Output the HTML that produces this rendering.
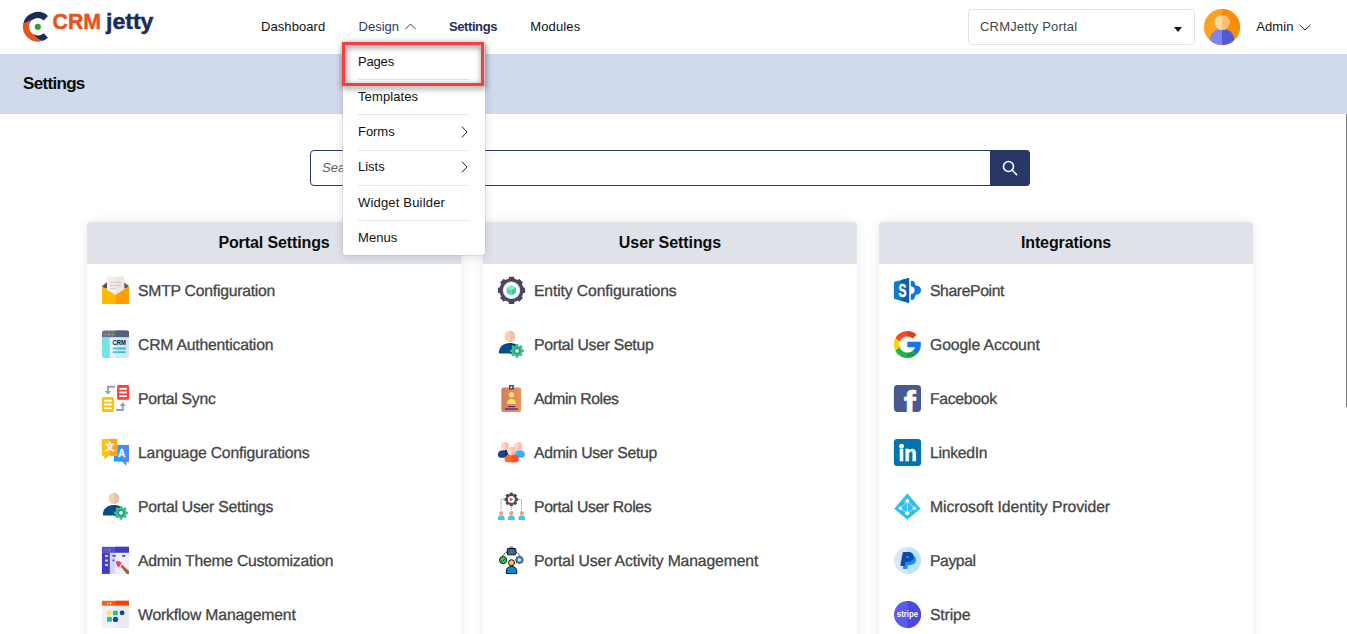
<!DOCTYPE html>
<html lang="en">
<head>
<meta charset="utf-8">
<title>Settings</title>
<style>
*{box-sizing:border-box;margin:0;padding:0}
html,body{width:1347px;height:634px;overflow:hidden;background:#fff}
body{font-family:"Liberation Sans",sans-serif;color:#111;position:relative}
.abs{position:absolute;white-space:nowrap;line-height:1}
#nav{position:absolute;left:0;top:0;width:1347px;height:54px;background:#fff}
.nv{position:absolute;top:19px;font-size:13px;line-height:15px;white-space:nowrap;color:#111}
#band{position:absolute;left:0;top:54px;width:1347px;height:60px;background:#d1d9ec}
#band h1{position:absolute;left:23px;top:20px;font-size:17px;line-height:19px;font-weight:bold;color:#0b0b0b;white-space:nowrap}
#sel{position:absolute;left:968px;top:9px;width:227px;height:36px;border:1px solid #e1e4ef;border-radius:4px;background:#fff}
#sel .st{position:absolute;left:11px;top:9px;font-size:13px;line-height:15px;color:#444;white-space:nowrap}
#sel i{position:absolute;left:204.5px;top:17px;width:0;height:0;border-left:4px solid transparent;border-right:4px solid transparent;border-top:5px solid #111}
#search{position:absolute;left:310px;top:150px;width:720px;height:36px;border:1px solid #273867;border-radius:4px;background:#fff}
#search .ph{position:absolute;left:11px;top:9px;font-size:13px;line-height:15px;font-style:italic;color:#5e5e5e;white-space:nowrap}
#sbtn{position:absolute;left:990px;top:150px;width:40px;height:36px;background:#273867;border-radius:0 4px 4px 0}
.card{position:absolute;top:222px;width:374px;height:430px;background:#fff;border-radius:4px 4px 0 0;box-shadow:0 0 12px rgba(0,0,0,.085)}
.card .hd{position:absolute;left:0;top:0;width:100%;height:42px;background:#dfe2e8;border-radius:4px 4px 0 0;text-align:center;font-weight:bold;font-size:16px;line-height:42px;color:#0b0b0b;white-space:nowrap}
.it{position:absolute;left:14px;height:28px;width:340px}
.it svg{position:absolute;left:0;top:0;width:28px;height:28px;overflow:visible}
.it .lbl{position:absolute;left:37px;top:6px;font-size:15.75px;line-height:18px;text-rendering:geometricPrecision;color:#444;white-space:nowrap;-webkit-text-stroke:.3px #444}
#dd{position:absolute;left:343px;top:44px;width:142px;height:211.4px;background:#fff;border-radius:0 0 3px 3px;box-shadow:0 2px 10px rgba(40,50,90,.17),0 0 0 1px rgba(205,205,238,.4)}
#dd .di{position:absolute;left:15px;width:111px;height:35px;font-size:13px;line-height:35px;color:#111;white-space:nowrap}
#dd .ln{position:absolute;left:15px;width:111px;height:1px;background:#e4e7f4}
#dd .di svg{position:absolute;right:1px;top:12px;width:7px;height:12px}
#hl{position:absolute;left:342px;top:42px;width:142px;height:44px;border:3px solid #f93c40;filter:drop-shadow(1px 2px 3px rgba(0,0,0,.6))}
#sb{position:absolute;left:1345.6px;top:114px;width:1.4px;height:293px;background:#777}
</style>
</head>
<body>
<div id="nav">
  <svg class="abs" style="left:22px;top:10px" width="134" height="36" viewBox="0 0 134 36">
    <path d="M25.96 5.9 A14.9 14.9 0 0 0 1.17 13.96 L10.56 9.85 A8.7 8.7 0 0 1 21.73 10.44 Z" fill="#1b2c58"/>
    <path d="M11 24.05 A8.7 8.7 0 0 0 21.73 23.16 L25.96 27.7 A14.9 14.9 0 0 1 19.91 31.12 Q14 28.6 11 24.05 Z" fill="#1b2c58"/>
    <path d="M1.17 13.96 A14.9 14.9 0 0 0 19.91 31.12 Q14 28.6 11 24.05 A8.7 8.7 0 0 1 10.56 9.85 Z" fill="#e9531f"/>
    <circle cx="15.8" cy="16.8" r="3.1" fill="#2aa52a"/>
    <text x="30.5" y="18.5" font-family="Liberation Sans, sans-serif" font-weight="bold" font-size="22.8" fill="#e8521e" stroke="#e8521e" stroke-width=".5" textLength="48.6" lengthAdjust="spacingAndGlyphs">CRM</text>
    <text x="84" y="18.5" font-family="Liberation Sans, sans-serif" font-weight="bold" font-size="22" fill="#1b2c58" stroke="#1b2c58" stroke-width=".5" textLength="47.4" lengthAdjust="spacingAndGlyphs">jetty</text>
  </svg>
  <span class="nv" style="left:261px"><span id="n0" style="letter-spacing:0.077px">Dashboard</span></span>
  <span class="nv" style="left:358.6px;color:#2c3a66"><span id="n1" style="letter-spacing:-0.011px">Design</span></span>
  <svg class="abs" style="left:405px;top:23px" width="11" height="7" viewBox="0 0 11 7"><path d="M0.5 6 L5.5 1 L10.5 6" fill="none" stroke="#2c3a66" stroke-width="1"/></svg>
  <span class="nv" style="left:449px;color:#1f2d5a;font-weight:bold"><span id="n2" style="letter-spacing:-0.412px">Settings</span></span>
  <span class="nv" style="left:530.3px"><span id="n3" style="letter-spacing:0.123px">Modules</span></span>
  <div id="sel"><span class="st"><span id="n4" style="letter-spacing:0.177px">CRMJetty Portal</span></span><i></i></div>
  <svg class="abs" style="left:1204px;top:9px" width="36" height="36" viewBox="0 0 36 36">
    <defs><clipPath id="avc"><circle cx="18" cy="18" r="18"/></clipPath></defs>
    <g clip-path="url(#avc)">
      <rect x="0" y="0" width="36" height="36" fill="#fba220"/>
      <rect x="18" y="0" width="18" height="36" fill="#fb8c0a"/>
      <path d="M5.8 36 V31 C5.8 24.5 10.5 20 18 20 H19 V36 Z" fill="#7b86e8"/>
      <path d="M30.2 36 V31 C30.2 24.5 25.5 20 18 20 V36 Z" fill="#4c5bd8"/>
      <circle cx="18" cy="13.5" r="7.5" fill="#fdd9a0"/>
      <path d="M18 6 A7.5 7.5 0 0 1 18 21 Z" fill="#fbc07a"/>
    </g>
  </svg>
  <span class="nv" style="left:1256.3px"><span id="n5" style="letter-spacing:0.068px">Admin</span></span>
  <svg class="abs" style="left:1298.6px;top:24.4px" width="12" height="7" viewBox="0 0 12 7"><path d="M0.5 0.8 L6 6 L11.5 0.8" fill="none" stroke="#222" stroke-width="1"/></svg>
</div>
<div id="band"><h1><span id="b0" style="letter-spacing:-0.683px">Settings</span></h1></div>

<div id="search"><span class="ph">Search</span></div>
<div id="sbtn"><svg class="abs" style="left:12px;top:10px" width="16" height="16" viewBox="0 0 16 16"><circle cx="6.5" cy="6.5" r="5" fill="none" stroke="#fff" stroke-width="1.6"/><path d="M10.3 10.3 L14.6 14.6" stroke="#fff" stroke-width="1.5" stroke-linecap="round"/></svg></div>

<div class="card" style="left:87px"><div class="hd"><span id="h0" class="" style=";letter-spacing:-0.114px">Portal Settings</span></div>
  <div class="it" style="top:55.0px"><svg viewBox="0 0.4 28 28"><path d="M1 9.6 L5.6 6 H23.4 L28 9.6 V12 H1 Z" fill="#5d5058"/><rect x="6" y="0" width="17.2" height="20" fill="#f6efeb"/><rect x="14.5" y="0" width="8.7" height="20" fill="#efe4e0"/><rect x="9" y="5" width="11" height="1.3" fill="#d6cdcc"/><rect x="9" y="8.2" width="11" height="1.3" fill="#d6cdcc"/><rect x="9" y="11.4" width="6" height="1.3" fill="#d9d0ce"/><path d="M1 9.6 L14.5 18.6 L28 9.6 V26.2 Q28 27.4 26.8 27.4 H2.2 Q1 27.4 1 26.2 Z" fill="#ffba00"/><path d="M28 9.6 L14.5 18.6 V27.4 H26.8 Q28 27.4 28 26.2 Z" fill="#ff9d00"/></svg><span id="t0_0" class="lbl" style=";letter-spacing:-0.246px">SMTP Configuration</span></div>
  <div class="it" style="top:109.0px"><svg viewBox="0 0.4 28 28"><path d="M1 2.2 Q1 0 3.2 0 H25.8 Q28 0 28 2.2 V7 H1 Z" fill="#66718f"/><path d="M14.5 0 H25.8 Q28 0 28 2.2 V7 H14.5 Z" fill="#56607f"/><circle cx="4.6" cy="4" r="0.9" fill="#f5782a"/><circle cx="8.1" cy="4" r="0.9" fill="#f5b12a"/><circle cx="11.7" cy="4" r="0.9" fill="#7ac82a"/><path d="M1 7 H8.9 V27.4 H3.2 Q1 27.4 1 25.2 Z" fill="#76e2e4"/><path d="M8.9 7 H28 V25.2 Q28 27.4 25.8 27.4 H8.9 Z" fill="#e4efff"/><path d="M14.5 7 H28 V25.2 Q28 27.4 25.8 27.4 H14.5 Z" fill="#d0e4fd"/><text x="18.3" y="14.9" text-anchor="middle" font-family="Liberation Sans, sans-serif" font-weight="bold" font-size="6.6" fill="#111" textLength="13.4" lengthAdjust="spacingAndGlyphs">CRM</text><rect x="11.6" y="17" width="6.7" height="1.9" rx=".9" fill="#2fd3d6"/><rect x="17.5" y="17" width="7.5" height="1.9" rx=".9" fill="#3bbdb7"/><rect x="11.6" y="20.6" width="6.7" height="1.9" rx=".9" fill="#2fd3d6"/><rect x="17.5" y="20.6" width="7.5" height="1.9" rx=".9" fill="#3bbdb7"/></svg><span id="t0_1" class="lbl" style=";letter-spacing:-0.222px">CRM Authentication</span></div>
  <div class="it" style="top:163.0px"><svg viewBox="0 0.4 28 28"><rect x="16.1" y="0.3" width="11.9" height="14.9" rx="1.5" fill="#ff3a3a"/><rect x="18.3" y="3.2" width="7.6" height="1.9" fill="#fff"/><rect x="18.3" y="6.9" width="7.6" height="1.9" fill="#fff"/><rect x="18.3" y="10.6" width="7.6" height="1.9" fill="#fff"/><rect x="0.9" y="12.3" width="12" height="15.1" rx="1.5" fill="#ffbe0b"/><rect x="3.1" y="15.2" width="7.6" height="1.9" fill="#fff"/><rect x="3.1" y="18.9" width="7.6" height="1.9" fill="#fff"/><rect x="3.1" y="22.6" width="7.6" height="1.9" fill="#fff"/><path d="M13.9 2.1 H6.9 V9" fill="none" stroke="#90a4ae" stroke-width="1.9"/><path d="M3.6 6.3 L6.9 9.9 L10.2 6.3 Z" fill="#90a4ae"/><path d="M15.1 25.4 H21.8 V18.6" fill="none" stroke="#90a4ae" stroke-width="1.9"/><path d="M18.5 21.3 L21.8 17.7 L25.1 21.3 Z" fill="#90a4ae"/></svg><span id="t0_2" class="lbl" style=";letter-spacing:-0.277px">Portal Sync</span></div>
  <div class="it" style="top:217.0px"><svg viewBox="0 0.4 28 28"><path d="M12.9 6.3 H28 V23 H12.9 Z" fill="#1da1fb"/><path d="M20.5 6.3 H28 V23 H25.5 L25.2 27.2 L21.1 23 H20.5 Z" fill="#4a8bf8"/><rect x="0.6" y="0" width="15.8" height="17.4" fill="#fff" opacity=".6"/><path d="M0.9 0.3 H16.1 V17.1 H7.6 L3.5 21.2 L3.1 17.1 H0.9 Z" fill="#ffc107"/><rect x="8.8" y="0.3" width="7.3" height="16.8" fill="#ffa026"/><text x="8.8" y="11.9" text-anchor="middle" font-family="Liberation Sans, Noto Sans CJK SC, sans-serif" font-weight="bold" font-size="9.2" fill="#fdf6ec" stroke="#fdf6ec" stroke-width=".5">文</text><text x="20.5" y="18.6" text-anchor="middle" font-family="Liberation Sans, sans-serif" font-weight="bold" font-size="10" fill="#eef3fd" stroke="#eef3fd" stroke-width=".3">A</text></svg><span id="t0_3" class="lbl" style=";letter-spacing:-0.196px">Language Configurations</span></div>
  <div class="it" style="top:271.0px"><svg viewBox="0 0.4 28 28"><ellipse cx="12.9" cy="5.8" rx="5.3" ry="5.7" fill="#f5d3b9"/><path d="M12.9 0.1 A5.3 5.7 0 0 1 12.9 11.5 Z" fill="#ebc4a5"/><path d="M1.9 22 C1.9 16 6.5 12.3 12.9 12.3 H15 V23 H2.9 Q1.9 23 1.9 22 Z" fill="#014f8c"/><path d="M12.9 12.3 C16 12.3 18 13 19.5 14.2 V23 H12.9 Z" fill="#0a4070"/><rect x="18.65" y="13.30" width="2.70" height="13.80" rx="0.4" fill="#3dbf8f" transform="rotate(0.0 20.00 20.20)"/><rect x="18.65" y="13.30" width="2.70" height="13.80" rx="0.4" fill="#3dbf8f" transform="rotate(45.0 20.00 20.20)"/><rect x="18.65" y="13.30" width="2.70" height="13.80" rx="0.4" fill="#3dbf8f" transform="rotate(90.0 20.00 20.20)"/><rect x="18.65" y="13.30" width="2.70" height="13.80" rx="0.4" fill="#3dbf8f" transform="rotate(135.0 20.00 20.20)"/><circle cx="20.00" cy="20.20" r="5.40" fill="#3dbf8f"/><circle cx="20" cy="20.2" r="3.6" fill="#2f9c8a"/><circle cx="20" cy="20.2" r="1.9" fill="#f1f1fb"/></svg><span id="t0_4" class="lbl" style=";letter-spacing:-0.243px">Portal User Settings</span></div>
  <div class="it" style="top:325.0px"><svg viewBox="0 0.4 28 28"><rect x="0.9" y="0.2" width="27.1" height="6.1" fill="#5653cc"/><rect x="14.3" y="0.2" width="13.7" height="6.1" fill="#3f3dc4"/><circle cx="5" cy="3.4" r="0.95" fill="#f03a5f"/><circle cx="8.4" cy="3.4" r="0.95" fill="#1dc98a"/><rect x="0.9" y="6.3" width="8" height="21" fill="#3f3dc4"/><rect x="8.9" y="6.3" width="19.1" height="21" fill="#d5d5f3"/><rect x="14.3" y="6.3" width="13.7" height="21" fill="#eeeefe"/><rect x="4" y="8.3" width="3" height="2.1" fill="#f7c52b"/><rect x="4" y="12.9" width="3" height="2.1" fill="#f7c52b"/><rect x="4" y="17.3" width="3" height="2.1" fill="#f7c52b"/><rect x="11.5" y="8.4" width="3.2" height="1.7" fill="#4a48c8"/><rect x="21.1" y="8.4" width="3.2" height="1.7" fill="#4a48c8"/><rect x="11.6" y="12.9" width="1.8" height="1.8" fill="#4a48c8"/><path d="M19.5 19.6 L21.1 18.2 L28 24.5 V27.3 H25.8 Z" fill="#a0623a"/><path d="M18.8 20.2 L21.6 17.8 L20.4 16 L17.8 19 Z" fill="#fbf3f3"/><path d="M15 14.6 C17.2 14.2 19.6 15 20.6 16.4 L17.8 20.8 C16 19.4 14.8 17.2 15 14.6 Z" fill="#f04060"/></svg><span id="t0_5" class="lbl" style=";letter-spacing:-0.269px">Admin Theme Customization</span></div>
  <div class="it" style="top:379.0px"><svg viewBox="0 0.4 28 28"><rect x="0.9" y="0.2" width="27.1" height="5" fill="#ff5a10"/><rect x="14.5" y="0.2" width="13.5" height="5" fill="#f04400"/><rect x="0.9" y="5.2" width="27.1" height="22.1" fill="#eef2fa"/><rect x="14.5" y="5.2" width="13.5" height="22.1" fill="#e6eaf5"/><rect x="3.3" y="1.9" width="1.7" height="1.7" fill="#1dbf8f"/><rect x="6.1" y="1.9" width="1.7" height="1.7" fill="#ffd23a"/><rect x="8.7" y="1.9" width="1.6" height="1.7" fill="#fff"/><path d="M8.4 9.2 L11.6 12.3 L8.4 15.5 L5.2 12.3 Z" fill="#ffe34d"/><rect x="12" y="10.1" width="4.8" height="4.5" rx=".4" fill="#1cc49a"/><circle cx="21.1" cy="12.3" r="2.4" fill="#1d3a8f"/><rect x="6" y="16.4" width="4.9" height="4.8" rx=".4" fill="#1cc49a"/><circle cx="14.5" cy="18.8" r="2.6" fill="#1443a8"/><path d="M10.9 12.3 H12 M16.8 12.3 H18.8 M8.4 15.3 V16.4 M10.9 18.8 H12" stroke="#c9cfe0" stroke-width=".7"/></svg><span id="t0_6" class="lbl" style=";letter-spacing:-0.167px">Workflow Management</span></div>
</div>
<div class="card" style="left:483px"><div class="hd"><span id="h1" class="" style=";letter-spacing:-0.065px">User Settings</span></div>
  <div class="it" style="top:55.0px"><svg viewBox="0 0.4 28 28"><g><rect x="11.80" y="0.10" width="5.40" height="27.20" rx="0.4" fill="#4b4559" transform="rotate(0.0 14.50 13.70)"/><rect x="11.80" y="0.10" width="5.40" height="27.20" rx="0.4" fill="#4b4559" transform="rotate(45.0 14.50 13.70)"/><rect x="11.80" y="0.10" width="5.40" height="27.20" rx="0.4" fill="#4b4559" transform="rotate(90.0 14.50 13.70)"/><rect x="11.80" y="0.10" width="5.40" height="27.20" rx="0.4" fill="#4b4559" transform="rotate(135.0 14.50 13.70)"/><circle cx="14.50" cy="13.70" r="12.00" fill="#4b4559"/></g><circle cx="14.5" cy="13.7" r="8.7" fill="#e6e6fa"/><circle cx="14.5" cy="13.7" r="7.8" fill="#fdfdff"/><path d="M14.3 8.4 L18.9 11 L14.3 13.7 L9.7 11 Z" fill="#7df0c0"/><path d="M9.7 11 L14.3 13.7 V19 L9.7 16.4 Z" fill="#55dcae"/><path d="M18.9 11 L14.3 13.7 V19 L18.9 16.4 Z" fill="#3fc79a"/></svg><span id="t1_0" class="lbl" style=";letter-spacing:-0.135px">Entity Configurations</span></div>
  <div class="it" style="top:109.0px"><svg viewBox="0 0.4 28 28"><ellipse cx="12.9" cy="5.8" rx="5.3" ry="5.7" fill="#f5d3b9"/><path d="M12.9 0.1 A5.3 5.7 0 0 1 12.9 11.5 Z" fill="#ebc4a5"/><path d="M1.9 22 C1.9 16 6.5 12.3 12.9 12.3 H15 V23 H2.9 Q1.9 23 1.9 22 Z" fill="#014f8c"/><path d="M12.9 12.3 C16 12.3 18 13 19.5 14.2 V23 H12.9 Z" fill="#0a4070"/><rect x="18.65" y="13.30" width="2.70" height="13.80" rx="0.4" fill="#3dbf8f" transform="rotate(0.0 20.00 20.20)"/><rect x="18.65" y="13.30" width="2.70" height="13.80" rx="0.4" fill="#3dbf8f" transform="rotate(45.0 20.00 20.20)"/><rect x="18.65" y="13.30" width="2.70" height="13.80" rx="0.4" fill="#3dbf8f" transform="rotate(90.0 20.00 20.20)"/><rect x="18.65" y="13.30" width="2.70" height="13.80" rx="0.4" fill="#3dbf8f" transform="rotate(135.0 20.00 20.20)"/><circle cx="20.00" cy="20.20" r="5.40" fill="#3dbf8f"/><circle cx="20" cy="20.2" r="3.6" fill="#2f9c8a"/><circle cx="20" cy="20.2" r="1.9" fill="#f1f1fb"/></svg><span id="t1_1" class="lbl" style=";letter-spacing:-0.289px">Portal User Setup</span></div>
  <div class="it" style="top:163.0px"><svg viewBox="0 0.4 28 28"><defs><linearGradient id="rg" x1="0" x2="1" y1="0" y2="0"><stop offset="0" stop-color="#cf7f5f"/><stop offset="1" stop-color="#ea9362"/></linearGradient></defs><rect x="4.4" y="2.9" width="19.8" height="24.4" rx="2" fill="url(#rg)"/><rect x="12" y="0.3" width="4.8" height="4.6" rx=".6" fill="#5a2a78"/><rect x="13.4" y="1.8" width="1.9" height="1.9" fill="#fff"/><circle cx="14.5" cy="10.1" r="2.7" fill="#f7e060"/><path d="M10 19.3 C10 16.5 12 14.5 14.5 14.5 C17 14.5 19 16.5 19 19.3 Z" fill="#f7e060"/><rect x="11" y="21.4" width="7" height="1.1" fill="#5a2a78"/><rect x="7.9" y="23.7" width="13.2" height="1.4" fill="#5a2a78"/></svg><span id="t1_2" class="lbl" style=";letter-spacing:-0.445px">Admin Roles</span></div>
  <div class="it" style="top:217.0px"><svg viewBox="0 0.4 28 28"><path d="M0.9 16 C0.9 13.2 3 11.6 6 11.6 H10 V19.2 H3.4 C1.8 19.2 0.9 18 0.9 16 Z" fill="#1f3f8f"/><path d="M8 11.6 H9 C11 11.6 12 12.5 12 14 V19.2 H8 Z" fill="#142a66"/><path d="M17.5 14 C17.5 12.5 19 11.6 21.1 11.6 H23 V19.2 H17.5 Z" fill="#29c5f6"/><path d="M21.1 11.6 H23 C26 11.6 28 13.2 28 16 C28 18 27.1 19.2 25.5 19.2 H21.1 Z" fill="#4aa8ee"/><circle cx="8" cy="7.4" r="4" fill="#ffd5c5"/><path d="M8 3.4 A4 4 0 0 1 8 11.4 Z" fill="#ffbfa8"/><circle cx="21.1" cy="7.8" r="4.1" fill="#ffd5c5"/><path d="M21.1 3.7 A4.1 4.1 0 0 1 21.1 11.9 Z" fill="#ffbfa8"/><path d="M7.6 20.6 C7.6 17.8 9.6 16 12.4 16 H17 V23.6 H10.2 C8.6 23.6 7.6 22.4 7.6 20.6 Z" fill="#ff6a1a"/><path d="M14.5 16 H17 C19.8 16 21.8 17.8 21.8 20.6 C21.8 22.4 20.8 23.6 19.2 23.6 H14.5 Z" fill="#ff4a2a"/><circle cx="14.5" cy="12.3" r="4.5" fill="#fff" opacity=".55"/><circle cx="14.5" cy="12.3" r="4.1" fill="#ffd5c5"/><path d="M14.5 8.2 A4.1 4.1 0 0 1 14.5 16.4 Z" fill="#ffbfa8"/></svg><span id="t1_3" class="lbl" style=";letter-spacing:-0.307px">Admin User Setup</span></div>
  <div class="it" style="top:271.0px"><svg viewBox="0 0.4 28 28"><rect x="12.80" y="0.00" width="3.00" height="13.60" rx="0.4" fill="#4d4d4d" transform="rotate(0.0 14.30 6.80)"/><rect x="12.80" y="0.00" width="3.00" height="13.60" rx="0.4" fill="#4d4d4d" transform="rotate(45.0 14.30 6.80)"/><rect x="12.80" y="0.00" width="3.00" height="13.60" rx="0.4" fill="#4d4d4d" transform="rotate(90.0 14.30 6.80)"/><rect x="12.80" y="0.00" width="3.00" height="13.60" rx="0.4" fill="#4d4d4d" transform="rotate(135.0 14.30 6.80)"/><circle cx="14.30" cy="6.80" r="5.60" fill="#4d4d4d"/><circle cx="14.3" cy="6.8" r="3.5" fill="#fdfdfd"/><path d="M12.9 5 V8.6 L16.2 6.8 Z" fill="#f04068"/><path d="M6.9 6.8 H4.1 V17.6 M21.8 6.8 H24.5 V17.6 M14.3 14.5 V18" fill="none" stroke="#5a6488" stroke-width=".8" stroke-dasharray="1 1"/><circle cx="4.2" cy="20.5" r="2.1" fill="#e0a870"/><circle cx="14.3" cy="20.5" r="2.1" fill="#e0a870"/><circle cx="24.8" cy="20.5" r="2.1" fill="#e0a870"/><path d="M0.9 27.3 V25.6 C0.9 23.8 2.3 22.7 4.2 22.7 C6.2 22.7 7.6 23.8 7.6 25.6 V27.3 Z" fill="#4ac0ea"/><path d="M10.9 27.3 V25.6 C10.9 23.8 12.3 22.7 14.3 22.7 C16.3 22.7 17.7 23.8 17.7 25.6 V27.3 Z" fill="#4ac0ea"/><path d="M21.4 27.3 V25.6 C21.4 23.8 22.8 22.7 24.8 22.7 C26.7 22.7 28 23.8 28 25.6 V27.3 Z" fill="#4ac0ea"/></svg><span id="t1_4" class="lbl" style=";letter-spacing:-0.366px">Portal User Roles</span></div>
  <div class="it" style="top:325.0px"><svg viewBox="0 0.4 28 28"><path d="M5.6 9.4 C6.8 7.2 8.6 5.8 10.4 5.2 M23.2 9.4 C22 7.2 20.4 5.8 18.6 5.2" fill="none" stroke="#111" stroke-width=".9" stroke-dasharray="1.6 .7"/><path d="M12.7 2 V1.6 C12.7 0.9 13.3 0.6 14.4 0.6 C15.6 0.6 16.2 0.9 16.2 1.6 V2" fill="none" stroke="#1a2030" stroke-width=".9"/><rect x="10.3" y="1.9" width="8.5" height="6.3" rx=".7" fill="#3a6898" stroke="#10141c" stroke-width="1"/><path d="M10.5 3 L14.5 5.4 L18.6 3" fill="none" stroke="#24466e" stroke-width=".8"/><circle cx="14.5" cy="5.3" r=".7" fill="#e8a23a"/><circle cx="6.1" cy="13.5" r="3.6" fill="#3fc860" stroke="#0c1c10" stroke-width="1"/><path d="M4.3 13.6 L5.6 14.9 L8 12.2" fill="none" stroke="#15602a" stroke-width="1"/><rect x="21.45" y="9.10" width="1.90" height="8.40" rx="0.4" fill="#2a3f66" transform="rotate(0.0 22.40 13.30)"/><rect x="21.45" y="9.10" width="1.90" height="8.40" rx="0.4" fill="#2a3f66" transform="rotate(45.0 22.40 13.30)"/><rect x="21.45" y="9.10" width="1.90" height="8.40" rx="0.4" fill="#2a3f66" transform="rotate(90.0 22.40 13.30)"/><rect x="21.45" y="9.10" width="1.90" height="8.40" rx="0.4" fill="#2a3f66" transform="rotate(135.0 22.40 13.30)"/><circle cx="22.40" cy="13.30" r="3.40" fill="#2a3f66"/><rect x="21.75" y="9.60" width="1.30" height="7.40" rx="0.4" fill="#4a78b8" transform="rotate(0.0 22.40 13.30)"/><rect x="21.75" y="9.60" width="1.30" height="7.40" rx="0.4" fill="#4a78b8" transform="rotate(45.0 22.40 13.30)"/><rect x="21.75" y="9.60" width="1.30" height="7.40" rx="0.4" fill="#4a78b8" transform="rotate(90.0 22.40 13.30)"/><rect x="21.75" y="9.60" width="1.30" height="7.40" rx="0.4" fill="#4a78b8" transform="rotate(135.0 22.40 13.30)"/><circle cx="22.40" cy="13.30" r="2.90" fill="#4a78b8"/><circle cx="22.4" cy="13.3" r="1.7" fill="#dbe9f8"/><circle cx="14.5" cy="16.1" r="3" fill="#f9b978" stroke="#0a0a0a" stroke-width="1"/><path d="M9.3 27 V24.6 C9.3 21.6 11.4 19.8 14.5 19.8 C17.6 19.8 19.8 21.6 19.8 24.6 V27 Z" fill="#0a8ac8" stroke="#06121a" stroke-width="1"/></svg><span id="t1_5" class="lbl" style=";letter-spacing:-0.138px">Portal User Activity Management</span></div>
</div>
<div class="card" style="left:879px"><div class="hd"><span id="h2" class="" style=";letter-spacing:-0.114px">Integrations</span></div>
  <div class="it" style="top:55.0px"><svg viewBox="0 0.4 28 28"><g fill="#0f78d4"><circle cx="18.9" cy="7" r="2.8"/><circle cx="18.9" cy="20.5" r="2.8"/><circle cx="23.6" cy="13.6" r="4.4"/><path d="M18.9 7 L23.6 13.6 L18.9 20.5" fill="none" stroke="#0f78d4" stroke-width="4.4" stroke-linejoin="round"/></g><circle cx="17.9" cy="13.7" r="3.7" fill="#fff"/><rect x="15" y="3" width="2.7" height="22" fill="#fff"/><path d="M0.9 5.4 L16.1 1.3 V26.5 L0.9 22.1 Z" fill="#0f78d4"/><path d="M8.2 3.4 L16.1 1.3 V26.5 L8.2 24.2 Z" fill="#0b5fad"/><text x="9.6" y="20.3" text-anchor="middle" font-family="Liberation Sans, sans-serif" font-weight="bold" font-size="18.6" fill="#fff" stroke="#fff" stroke-width=".4" textLength="8" lengthAdjust="spacingAndGlyphs">S</text></svg><span id="t2_0" class="lbl" style=";letter-spacing:-0.394px">SharePoint</span></div>
  <div class="it" style="top:109.0px"><svg viewBox="0 0.4 28 28"><defs><linearGradient id="gr" x1="0" x2="1"><stop offset=".565" stop-color="#ff4a2a"/><stop offset=".565" stop-color="#d9401f"/></linearGradient><linearGradient id="gg" x1="0" x2="1"><stop offset=".57" stop-color="#1fb350"/><stop offset=".57" stop-color="#12a040"/></linearGradient></defs><clipPath id="gyc"><rect x="0" y="10" width="14" height="28"/></clipPath><g transform="translate(-1.8 -2.3) scale(0.675)"><path clip-path="url(#gyc)" fill="#ffd400" d="M43.611,20.083H42V20H24v8h11.303c-1.649,4.657-6.08,8-11.303,8c-6.627,0-12-5.373-12-12c0-6.627,5.373-12,12-12c3.059,0,5.842,1.154,7.961,3.039l5.657-5.657C34.046,6.053,29.268,4,24,4C12.955,4,4,12.955,4,24c0,11.045,8.955,20,20,20c11.045,0,20-8.955,20-20C44,22.659,43.862,21.35,43.611,20.083z"/><path fill="url(#gr)" d="M6.306,14.691l6.571,4.819C14.655,15.108,18.961,12,24,12c3.059,0,5.842,1.154,7.961,3.039l5.657-5.657C34.046,6.053,29.268,4,24,4C16.318,4,9.656,8.337,6.306,14.691z"/><path fill="url(#gg)" d="M24,44c5.166,0,9.86-1.977,13.409-5.192l-6.19-5.238C29.211,35.091,26.715,36,24,36c-5.202,0-9.619-3.317-11.283-7.946l-6.522,5.025C9.505,39.556,16.227,44,24,44z"/><path fill="#1a73e8" d="M43.611,20.083H42V20H24v8h11.303c-0.792,2.237-2.231,4.166-4.087,5.571c0.001-0.001,0.002-0.001,0.003-0.002l6.19,5.238C36.971,39.205,44,34,44,24C44,22.659,43.862,21.35,43.611,20.083z"/></g></svg><span id="t2_1" class="lbl" style=";letter-spacing:-0.108px">Google Account</span></div>
  <div class="it" style="top:163.0px"><svg viewBox="0 0.4 28 28"><rect x="0.9" y="0.3" width="27.1" height="27" rx="3.6" fill="#475993"/><clipPath id="fbc"><rect x="0.9" y="0.3" width="27.1" height="27"/></clipPath><g clip-path="url(#fbc)"><text x="10.8" y="32.4" font-family="Liberation Sans, sans-serif" font-weight="bold" font-size="36" fill="#fff" stroke="#fff" stroke-width=".6">f</text></g></svg><span id="t2_2" class="lbl" style=";letter-spacing:-0.296px">Facebook</span></div>
  <div class="it" style="top:217.0px"><svg viewBox="0 0.4 28 28"><rect x="0.9" y="0.3" width="27.1" height="27" rx="3.2" fill="#0073b1"/><text x="5.6" y="22.3" font-family="Liberation Sans, sans-serif" font-weight="bold" font-size="21.5" fill="#fff" stroke="#fff" stroke-width=".5" textLength="18.2" lengthAdjust="spacingAndGlyphs">in</text><circle cx="8.5" cy="7.6" r="2.4" fill="#fff"/></svg><span id="t2_3" class="lbl" style=";letter-spacing:-0.283px">LinkedIn</span></div>
  <div class="it" style="top:271.0px"><svg viewBox="0 0.4 28 28"><path d="M14.3 0.8 L27.4 16.1 L14.3 26.8 L1.4 16.1 Z" fill="#2bbfef" stroke="#2bbfef" stroke-width=".2" stroke-linejoin="round"/><path d="M14.3 8.4 L7.4 15.6 L14.3 20.7 L21.4 15.6 Z M14.3 8.4 V20.7" fill="none" stroke="#c8eefb" stroke-width=".8"/><circle cx="14.3" cy="8.4" r="2" fill="#fff"/><circle cx="7.4" cy="15.6" r="1.7" fill="#fff"/><circle cx="21.4" cy="15.6" r="1.7" fill="#fff"/><circle cx="14.3" cy="20.7" r="2" fill="#fff"/></svg><span id="t2_4" class="lbl" style=";letter-spacing:-0.077px">Microsoft Identity Provider</span></div>
  <div class="it" style="top:325.0px"><svg viewBox="0 0.4 28 28"><circle cx="14.5" cy="13.9" r="13.5" fill="#d2ebfa"/><path d="M14.5 0.4 A13.5 13.5 0 0 1 14.5 27.4 Z" fill="#bfe2f7"/><text x="10.6" y="21.2" font-family="Liberation Sans, sans-serif" font-weight="bold" font-style="italic" font-size="16.8" fill="#1a8cf8" stroke="#1a8cf8" stroke-width="2" stroke-linejoin="round">P</text><text x="8" y="18.4" font-family="Liberation Sans, sans-serif" font-weight="bold" font-style="italic" font-size="17.3" fill="#0a4aa8" stroke="#0a4aa8" stroke-width="2" stroke-linejoin="round">P</text></svg><span id="t2_5" class="lbl" style=";letter-spacing:-0.429px">Paypal</span></div>
  <div class="it" style="top:379.0px"><svg viewBox="0 0.4 28 28"><circle cx="14.5" cy="13.9" r="13.5" fill="#5b5bf0"/><path d="M14.5 0.4 A13.5 13.5 0 0 1 14.5 27.4 Z" fill="#4b48e0"/><text x="3.8" y="16.1" font-family="Liberation Sans, sans-serif" font-weight="bold" font-size="9" fill="#fff" textLength="21.2" lengthAdjust="spacingAndGlyphs">stripe</text></svg><span id="t2_6" class="lbl" style=";letter-spacing:-0.143px">Stripe</span></div>
</div>

<div id="dd">
  <div class="di" style="top:0"><span id="d0" style="letter-spacing:-0.175px">Pages</span></div>
  <div class="di" style="top:35px"><span id="d1" style="letter-spacing:0.106px">Templates</span></div>
  <div class="di" style="top:70px"><span id="d2" style="letter-spacing:-0.049px">Forms</span><svg viewBox="0 0 7 12"><path d="M1 0.7 L6 6 L1 11.3" fill="none" stroke="#222" stroke-width="1"/></svg></div>
  <div class="di" style="top:105px"><span id="d3" style="letter-spacing:-0.007px">Lists</span><svg viewBox="0 0 7 12"><path d="M1 0.7 L6 6 L1 11.3" fill="none" stroke="#222" stroke-width="1"/></svg></div>
  <div class="di" style="top:141px"><span id="d4" style="letter-spacing:0.182px">Widget Builder</span></div>
  <div class="di" style="top:176px"><span id="d5" style="letter-spacing:0.074px">Menus</span></div>
  <div class="ln" style="top:35.0px"></div>
  <div class="ln" style="top:70.3px"></div>
  <div class="ln" style="top:105.7px"></div>
  <div class="ln" style="top:141.0px"></div>
  <div class="ln" style="top:176.3px"></div>
</div>
<div id="hl"></div>
<div id="sb"></div>
</body>
</html>
